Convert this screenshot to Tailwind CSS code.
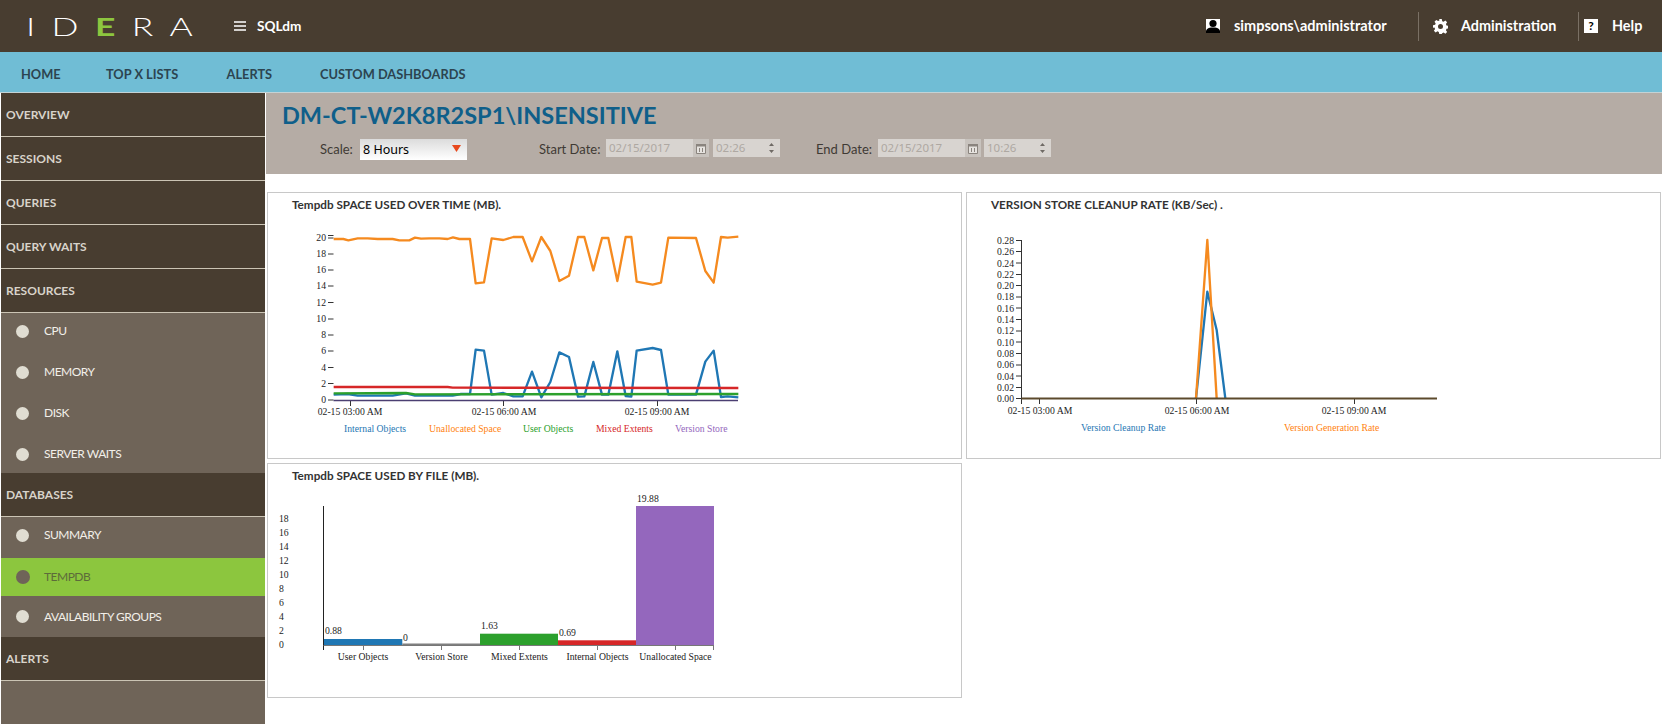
<!DOCTYPE html>
<html lang="en">
  <head>
    <meta charset="UTF-8" />
    <title>SQLdm - Tempdb</title>
    <script src="https://cdn.jsdelivr.net/npm/@tailwindcss/browser@4"></script>
  </head>
  <body class="bg-white h-screen overflow-hidden font-['Lato','Liberation_Sans',sans-serif]">
    <!-- top bar -->
    <header class="h-[52px] bg-[#483d30] flex items-center text-white">
      <div class="w-[234px] pl-[26px] shrink-0 h-full flex items-center">
        <div class="flex items-center origin-left scale-x-[1.42] text-[25px] leading-none font-light tracking-[11.500px]">
          <span>I</span><span>D</span><span class="text-[#8dc63f] font-bold">E</span><span>R</span><span>A</span>
        </div>
      </div>
      <svg class="w-[12px] h-[10px] mr-[11px]" viewBox="0 0 12 10"><path d="M0 1h12M0 5h12M0 9h12" stroke="#fff" stroke-width="1.6" /></svg>
      <span class="text-[13.600px] font-bold">SQLdm</span>
      <div class="ml-auto flex items-center h-full">
        <svg class="w-[14px] h-[14px]" viewBox="0 0 14 14"><rect width="14" height="14" fill="#fff" /><circle cx="7" cy="4.5" r="3.6" fill="#000" /><path d="M0 14v-2.5C1 9 4 8.5 7 8.5s6 .5 7 3V14z" fill="#000" /></svg>
        <span class="ml-[14px] w-[184px] text-[14.500px] font-bold">simpsons\administrator</span>
        <div class="w-px h-[29px] bg-[#7a7064]"></div>
        <svg class="ml-[14px] w-[15px] h-[15px]" viewBox="0 0 24 24"><path fill="#fff" fill-rule="evenodd" d="M10 0h4l.7 3.4 2.2.9L19.800 2.400l2.800 2.800-1.900 2.900.9 2.200 3.400.7v4l-3.400.7-.9 2.200 1.900 2.900-2.800 2.800-2.900-1.900-2.200.9L14 24h-4l-.7-3.400-2.200-.9-2.900 1.900-2.800-2.800 1.900-2.900-.9-2.200L0 14v-4l3.400-.7.9-2.200-1.900-2.900 2.800-2.800 2.900 1.900 2.200-.9zM12 8a4 4 0 1 0 0 8 4 4 0 0 0 0-8z" /></svg>
        <span class="ml-[13px] w-[117px] text-[14.400px] font-bold">Administration</span>
        <div class="w-px h-[29px] bg-[#7a7064]"></div>
        <div class="ml-[5px] w-[14px] h-[14px] bg-white text-black text-[12px] font-bold leading-[14px] text-center">?</div>
        <span class="ml-[14px] w-[50px] text-[14.400px] font-bold">Help</span>
      </div>
    </header>

    <!-- main nav -->
    <nav class="h-[41px] pt-[6px] bg-[#70bdd5] border-b border-[#c3d3d6] flex items-center text-[12.800px] font-bold text-[#2c4450]">
      <a class="ml-[21px] w-[85px]">HOME</a>
      <a class="w-[120.500px]">TOP X LISTS</a>
      <a class="w-[93.500px]">ALERTS</a>
      <a>CUSTOM DASHBOARDS</a>
    </nav>

    <div class="flex h-[631px]">
      <!-- sidebar -->
      <aside class="ml-px w-[264px] shrink-0 bg-[#6f6458] text-[12px]">
        <div class="h-[44px] bg-[#483d30] border-b border-[#cbc4b4] flex items-center pl-[5px] font-bold text-[#d8d3ca]">OVERVIEW</div>
        <div class="h-[44px] bg-[#483d30] border-b border-[#cbc4b4] flex items-center pl-[5px] font-bold text-[#d8d3ca]">SESSIONS</div>
        <div class="h-[44px] bg-[#483d30] border-b border-[#cbc4b4] flex items-center pl-[5px] font-bold text-[#d8d3ca]">QUERIES</div>
        <div class="h-[44px] bg-[#483d30] border-b border-[#cbc4b4] flex items-center pl-[5px] font-bold text-[#d8d3ca]">QUERY WAITS</div>
        <div class="h-[44px] bg-[#483d30] border-b border-[#cbc4b4] flex items-center pl-[5px] font-bold text-[#d8d3ca]">RESOURCES</div>
        <div class="h-[160px] text-[#f2efe9] tracking-[-0.500px]">
          <div class="h-[41px] pb-[5px] flex items-center pl-[15px]"><span class="w-[13px] h-[13px] rounded-full bg-[#e0ddd2] mr-[15px]"></span>CPU</div>
          <div class="h-[41px] pb-[5px] flex items-center pl-[15px]"><span class="w-[13px] h-[13px] rounded-full bg-[#e0ddd2] mr-[15px]"></span>MEMORY</div>
          <div class="h-[41px] pb-[5px] flex items-center pl-[15px]"><span class="w-[13px] h-[13px] rounded-full bg-[#e0ddd2] mr-[15px]"></span>DISK</div>
          <div class="h-[39px] pb-[3px] flex items-center pl-[15px]"><span class="w-[13px] h-[13px] rounded-full bg-[#e0ddd2] mr-[15px]"></span>SERVER WAITS</div>
        </div>
        <div class="h-[44px] bg-[#483d30] border-b border-[#cbc4b4] flex items-center pl-[5px] font-bold text-[#d8d3ca]">DATABASES</div>
        <div class="text-[#f2efe9] tracking-[-0.500px]">
          <div class="h-[41px] pb-[5px] flex items-center pl-[15px]"><span class="w-[13px] h-[13px] rounded-full bg-[#e0ddd2] mr-[15px]"></span>SUMMARY</div>
          <div class="h-[38px] flex items-center pl-[15px] bg-[#8cc63e] text-[#5d6b3a]"><span class="w-[14px] h-[14px] rounded-full bg-[#6f6458] mr-[14px]"></span>TEMPDB</div>
          <div class="h-[41px] flex items-center pl-[15px]"><span class="w-[13px] h-[13px] rounded-full bg-[#e0ddd2] mr-[15px]"></span>AVAILABILITY GROUPS</div>
        </div>
        <div class="h-[44px] bg-[#483d30] border-b border-[#cbc4b4] flex items-center pl-[5px] font-bold text-[#d8d3ca]">ALERTS</div>
      </aside>

      <main class="ml-px flex-1 min-w-0">
        <!-- title and date range -->
        <section class="h-[81px] bg-[#b5aca5]">
          <h1 class="pl-[16px] pt-[7px] h-[46px] text-[23.500px] leading-[30px] font-bold text-[#0f5f8a]">DM-CT-W2K8R2SP1\INSENSITIVE</h1>
          <div class="flex items-start pl-[54px] text-[13px] text-[#3f3a34]">
            <span class="w-[40px] leading-[20px]">Scale:</span>
            <div class="w-[107px] h-[21px] pt-[2px] bg-linear-to-b from-[#dcdcdc] to-white flex items-center pl-[3px] pr-[6px] justify-between text-black font-['Noto_Sans',sans-serif] text-[12.500px]">
              8 Hours
              <svg class="w-[9px] h-[7px] -mt-[5px]" viewBox="0 0 9 7"><path d="M0 0h9L4.500 7z" fill="#e8481c" /></svg>
            </div>
            <span class="ml-[72px] w-[67px] leading-[20px]">Start Date:</span>
            <div class="w-[103px] h-[18px] bg-[#d8d4d0] flex items-center justify-between pl-[3px] text-[11.500px] text-[#aea8a2] font-['Noto_Sans',sans-serif]">
              02/15/2017
              <div class="w-[16px] h-[18px] bg-[#c8c3be] flex items-center justify-center">
                <svg class="w-[10px] h-[11px]" viewBox="0 0 10 11"><path d="M.5 2.500h9v8h-9z" fill="#e6e3df" stroke="#8a847e" /><path d="M0 1h10v2.500H0z" fill="#8a847e" /><path d="M3.500 5v4M6.500 5v4" stroke="#8a847e" /></svg>
              </div>
            </div>
            <div class="ml-[4px] w-[67px] h-[18px] bg-[#d8d4d0] flex items-center justify-between pl-[3px] pr-[6px] text-[11.500px] text-[#aea8a2] font-['Noto_Sans',sans-serif]">
              02:26
              <svg class="w-[5px] h-[12px]" viewBox="0 0 5 12"><path d="M2.500 1 5 4H0zM2.500 11 0 8h5z" fill="#6f6a65" /></svg>
            </div>
            <span class="ml-[36px] w-[62px] leading-[20px]">End Date:</span>
            <div class="w-[103px] h-[18px] bg-[#d8d4d0] flex items-center justify-between pl-[3px] text-[11.500px] text-[#aea8a2] font-['Noto_Sans',sans-serif]">
              02/15/2017
              <div class="w-[16px] h-[18px] bg-[#c8c3be] flex items-center justify-center">
                <svg class="w-[10px] h-[11px]" viewBox="0 0 10 11"><path d="M.5 2.500h9v8h-9z" fill="#e6e3df" stroke="#8a847e" /><path d="M0 1h10v2.500H0z" fill="#8a847e" /><path d="M3.500 5v4M6.500 5v4" stroke="#8a847e" /></svg>
              </div>
            </div>
            <div class="ml-[3px] w-[67px] h-[18px] bg-[#d8d4d0] flex items-center justify-between pl-[3px] pr-[6px] text-[11.500px] text-[#aea8a2] font-['Noto_Sans',sans-serif]">
              10:26
              <svg class="w-[5px] h-[12px]" viewBox="0 0 5 12"><path d="M2.500 1 5 4H0zM2.500 11 0 8h5z" fill="#6f6a65" /></svg>
            </div>
          </div>
        </section>

        <!-- charts -->
        <section class="pt-[18px] pl-px grid grid-cols-[695px_695px] grid-rows-[267px_235px] gap-x-[4px] gap-y-[4px]">
          <div class="border border-[#c8c8c8] overflow-hidden">
            <h2 class="pl-[24px] h-[27px] leading-[22px] text-[11.700px] font-bold text-[#333]">Tempdb SPACE USED OVER TIME (MB).</h2>
            <svg width="693" height="237" viewBox="268 220 693 237" class="block font-['Liberation_Serif',serif] text-[9.700px]" fill="#222">
              <g fill="none" stroke="#333">
                <path d="M333.500 235.500H328M333.500 238H328M333.500 254H328M333.500 270H328M333.500 286H328M333.500 302.500H328M333.500 319H328M333.500 335H328M333.500 351H328M333.500 367.500H328M333.500 383.500H328M333.500 400H328" />
                <path d="M350.500 400v6M503.500 400v6M657.500 400v6" />
                <path d="M333.500 400.500H738" stroke="#4b3f72" stroke-width="1.500" />
              </g>
              <g text-anchor="end">
                <text x="326" y="241">20</text><text x="326" y="257">18</text><text x="326" y="273">16</text><text x="326" y="289">14</text><text x="326" y="306">12</text><text x="326" y="322">10</text><text x="326" y="338">8</text><text x="326" y="354">6</text><text x="326" y="371">4</text><text x="326" y="387">2</text><text x="326" y="403">0</text>
              </g>
              <g text-anchor="middle">
                <text x="350" y="415">02-15 03:00 AM</text><text x="504" y="415">02-15 06:00 AM</text><text x="657" y="415">02-15 09:00 AM</text>
              </g>
              <text x="344" y="432" fill="#1f77b4">Internal Objects</text>
              <text x="429" y="432" fill="#ff7f0e">Unallocated Space</text>
              <text x="523" y="432" fill="#2ca02c">User Objects</text>
              <text x="596" y="432" fill="#d62728">Mixed Extents</text>
              <text x="675" y="432" fill="#9467bd">Version Store</text>
              <g transform="translate(266 190) scale(.33333)" fill="none" stroke-width="7" stroke-linejoin="round">
                <polyline stroke="#1f77b4" points="203,614 245,612 275,617 320,617 380,617 420,610 447,617 520,617 560,617 585,612 612,612 629,479 654,482 677,614 712,609 742,619 770,619 798,545 826,622 853,576 880,487 909,501 936,620 955,619 982,516 1008,614 1027,614 1054,484 1079,618 1096,620 1112,482 1160,474 1185,480 1207,614 1290,614 1318,515 1343,482 1365,621 1385,619 1417,622" />
                <polyline stroke="#f58a1f" points="203,147 232,147 247,151 275,145 305,145 335,147 380,147 400,151 430,151 447,143 465,146 490,145 520,145 545,147 561,142 580,147 612,147 629,280 654,277 677,145 712,150 742,141 770,141 798,214 826,141 853,183 880,273 909,257 936,141 955,141 982,241 1008,144 1027,144 1054,273 1079,141 1096,141 1112,275 1160,284 1185,278 1207,143 1290,144 1318,243 1343,278 1365,141 1385,143 1417,140" />
                <polyline stroke="#2ca02c" points="203,610 420,609 447,613 1417,612" />
                <polyline stroke="#d62728" points="203,591 545,591 560,593 1417,594" />
              </g>
            </svg>
          </div>

          <div class="border border-[#c8c8c8] overflow-hidden">
            <h2 class="pl-[24px] h-[27px] leading-[22px] text-[11.700px] font-bold text-[#333]">VERSION STORE CLEANUP RATE (KB/Sec) .</h2>
            <svg width="693" height="237" viewBox="967 220 693 237" class="block font-['Liberation_Serif',serif] text-[9.700px]" fill="#222">
              <g transform="translate(960 190) scale(.33333)" fill="none" stroke-width="7" stroke-linejoin="round">
                <polyline stroke="#1f77b4" points="708,625 742,305 770,420 796,625" />
                <polyline stroke="#f58a1f" points="708,625 742,150 770,625" />
              </g>
              <g fill="none" stroke="#333">
                <path d="M1021.500 240v158.500M1016 240.500h5.500M1016 251.500h5.500M1016 263h5.500M1016 274.500h5.500M1016 285.500h5.500M1016 297h5.500M1016 308h5.500M1016 319.500h5.500M1016 331h5.500M1016 342h5.500M1016 353.500h5.500M1016 365h5.500M1016 376h5.500M1016 387.500h5.500M1016 398.500h5.500" />
                <path d="M1021.500 398v6M1039.500 398v6M1196.500 398v6M1354.500 398v6" />
                <path d="M1021.500 398.500H1437" stroke="#5c4a2c" stroke-width="2" />
              </g>
              <g text-anchor="end">
                <text x="1014" y="243.500">0.28</text><text x="1014" y="255">0.26</text><text x="1014" y="266.500">0.24</text><text x="1014" y="277.500">0.22</text><text x="1014" y="289">0.20</text><text x="1014" y="300">0.18</text><text x="1014" y="311.500">0.16</text><text x="1014" y="323">0.14</text><text x="1014" y="334">0.12</text><text x="1014" y="345.500">0.10</text><text x="1014" y="357">0.08</text><text x="1014" y="368">0.06</text><text x="1014" y="379.500">0.04</text><text x="1014" y="391">0.02</text><text x="1014" y="402">0.00</text>
              </g>
              <g text-anchor="middle">
                <text x="1040" y="413.500">02-15 03:00 AM</text><text x="1197" y="413.500">02-15 06:00 AM</text><text x="1354" y="413.500">02-15 09:00 AM</text>
              </g>
              <text x="1081" y="431" fill="#1f77b4">Version Cleanup Rate</text>
              <text x="1284" y="431" fill="#ff7f0e">Version Generation Rate</text>
            </svg>
          </div>

          <div class="border border-[#c8c8c8] overflow-hidden">
            <h2 class="pl-[24px] h-[27px] leading-[22px] text-[11.700px] font-bold text-[#333]">Tempdb SPACE USED BY FILE (MB).</h2>
            <svg width="693" height="206" viewBox="268 491 693 206" class="block font-['Liberation_Serif',serif] text-[9.700px]" fill="#222">
              <rect x="324" y="639" width="78.300" height="6.300" fill="#1f77b4" />
              <rect x="402.300" y="643.500" width="77.700" height="2" fill="#7f7f7f" />
              <rect x="480" y="633.700" width="78" height="11.600" fill="#2ca02c" />
              <rect x="558" y="640.300" width="78" height="5" fill="#d62728" />
              <rect x="636" y="506" width="78" height="139.300" fill="#9467bd" />
              <path d="M323.500 506v144" fill="none" stroke="#222" />
              <path d="M323.500 645.500H714M363.500 645v5M441.500 645v5M519.500 645v5M597.500 645v5M675.500 645v5M713.500 645v5" fill="none" stroke="#777" />
              <g>
                <text x="279" y="522">18</text><text x="279" y="536">16</text><text x="279" y="550">14</text><text x="279" y="564">12</text><text x="279" y="578">10</text><text x="279" y="592">8</text><text x="279" y="606">6</text><text x="279" y="620">4</text><text x="279" y="634">2</text><text x="279" y="648">0</text>
              </g>
              <g text-anchor="middle">
                <text x="363" y="660">User Objects</text><text x="441.500" y="660">Version Store</text><text x="519.500" y="660">Mixed Extents</text><text x="597.500" y="660">Internal Objects</text><text x="675.500" y="660">Unallocated Space</text>
              </g>
              <text x="325" y="634">0.88</text>
              <text x="403" y="641">0</text>
              <text x="481" y="629">1.63</text>
              <text x="559" y="636">0.69</text>
              <text x="637" y="502">19.88</text>
            </svg>
          </div>
        </section>
      </main>
    </div>
  </body>
</html>
